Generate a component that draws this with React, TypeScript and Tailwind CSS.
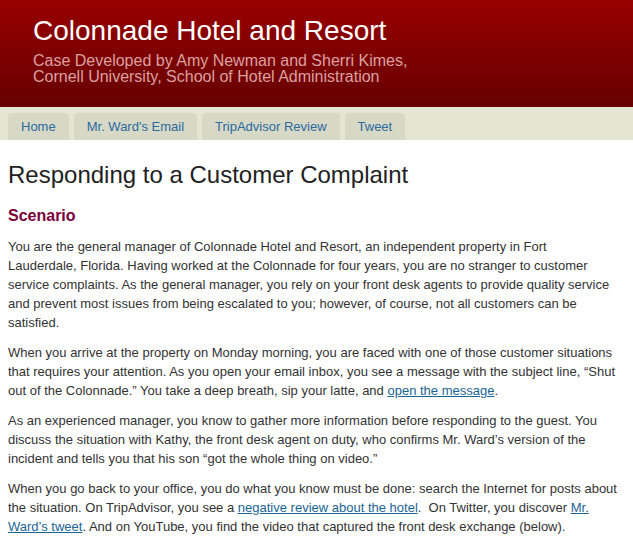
export default function App() {
  const tabs = ['Home', "Mr. Ward's Email", 'TripAdvisor Review', 'Tweet'];

  return (
    <div className="min-h-screen bg-white font-['Liberation_Sans',Arial,sans-serif] text-[#333333]">
      <header className="h-[107px] bg-gradient-to-b from-[#990000] to-[#660000] pl-[33px] pt-[15px]">
        <h1 className="text-[28px] leading-[32px] text-white">Colonnade Hotel and Resort</h1>
        <p className="mt-[6px] text-[16px] leading-[16px] text-[#dca0a0]">
          Case Developed by Amy Newman and Sherri Kimes,
          <br />
          Cornell University, School of Hotel Administration
        </p>
      </header>

      <nav className="flex h-[33px] items-end gap-[5px] bg-[#e5e5d3] px-2">
        {tabs.map((tab) => (
          <a
            key={tab}
            href="#"
            className="flex h-[27px] items-center rounded-t-[4px] bg-[#d8d8c7] px-[13px] text-[13px] text-[#2a6a9e]"
          >
            {tab}
          </a>
        ))}
      </nav>

      <main className="px-2 pt-[20px]">
        <h2 className="text-[24px] leading-[30px] text-[#222222]">Responding to a Customer Complaint</h2>
        <h3 className="mt-[16px] text-[16px] font-bold leading-[20px] text-[#7a003c]">Scenario</h3>

        <div className="mt-[11px] space-y-[11px] text-[13px] leading-[19px]">
          <p>
            You are the general manager of Colonnade Hotel and Resort, an independent property in Fort
            <br />
            Lauderdale, Florida. Having worked at the Colonnade for four years, you are no stranger to customer
            service complaints. As the general manager, you rely on your front desk agents to provide quality
            service and prevent most issues from being escalated to you; however, of course, not all customers can
            be satisfied.
          </p>
          <p>
            When you arrive at the property on Monday morning, you are faced with one of those customer situations
            that requires your attention. As you open your email inbox, you see a message with the subject line,
            “Shut out of the Colonnade.” You take a deep breath, sip your latte, and{' '}
            <a href="#" className="text-[#1a6496] underline">
              open the message
            </a>
            .
          </p>
          <p>
            As an experienced manager, you know to gather more information before responding to the guest. You
            discuss the situation with Kathy, the front desk agent on duty, who confirms Mr. Ward’s version of the
            incident and tells you that his son “got the whole thing on video.”
          </p>
          <p>
            When you go back to your office, you do what you know must be done: search the Internet for posts about
            the situation. On TripAdvisor, you see a{' '}
            <a href="#" className="text-[#1a6496] underline">
              negative review about the hotel
            </a>
            .&nbsp; On Twitter, you discover{' '}
            <a href="#" className="text-[#1a6496] underline">
              Mr. Ward’s tweet
            </a>
            . And on YouTube, you find the video that captured the front desk exchange (below).
          </p>
        </div>
      </main>
    </div>
  );
}
